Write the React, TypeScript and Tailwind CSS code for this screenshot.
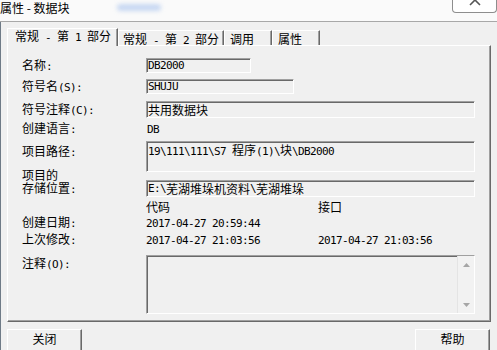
import React from 'react';
import clsx from 'clsx';

const CJK = "font-['Noto_Sans_CJK_SC',sans-serif] text-[12px]";
const LATIN = "font-['DejaVu_Sans_Mono',monospace] text-[11px] tracking-[-0.62px]";

// SimSun-like text: ASCII is half width (6px), CJK full width (12px)
function T({ s }: { s: string }) {
  const runs = s.match(/[\x00-\x7f]+|[^\x00-\x7f]+/g) ?? [];
  return (
    <>
      {runs.map((r, i) => (
        <span key={i} className={/^[\x00-\x7f]/.test(r) ? LATIN : CJK}>
          {r}
        </span>
      ))}
    </>
  );
}

function Field({ className, children }: { className?: string; children?: React.ReactNode }) {
  return (
    <div
      className={clsx(
        'border border-[#a0a0a0] border-r-white border-b-white shadow-[inset_1px_1px_0_#696969] pl-[1px]',
        className,
      )}
    >
      {children}
    </div>
  );
}

function Tab({ label, active, className }: { label: string; active?: boolean; className: string }) {
  return (
    <div
      className={clsx(
        'border-t border-l border-r border-white border-r-[#696969] shadow-[inset_-1px_0_0_#a0a0a0] bg-[#f0f0f0]',
        active ? 'relative z-10 -mb-px h-[18px]' : 'h-[15px] pt-[1px]',
        className,
      )}
    >
      <T s={label} />
    </div>
  );
}

function Button({ label }: { label: string }) {
  return (
    <div className="flex h-[24px] w-[75px] justify-center border border-white border-r-[#696969] border-b-[#696969] shadow-[inset_-1px_-1px_0_#a0a0a0] pt-[2px]">
      <T s={label} />
    </div>
  );
}

function Arrow({ up }: { up?: boolean }) {
  return (
    <div className="flex h-[17px] w-full items-center justify-center">
      <svg width="7" height="4" viewBox="0 0 7 4">
        <path d={up ? 'M0 4 L3.5 0 L7 4 Z' : 'M0 0 L3.5 4 L7 0 Z'} fill="#a6a6a6" />
      </svg>
    </div>
  );
}

export default function App() {
  return (
    <div className="h-[350px] w-[497px] overflow-hidden whitespace-pre bg-[#f0f0f0] leading-[13px] text-black">
      {/* title bar */}
      <div className="relative flex h-[22px] justify-between border-b border-[#a8a8a8] bg-[#fafafa]">
        <div className="font-['Noto_Sans_CJK_SC',sans-serif] text-[12px] leading-[15px]">属性 - 数据块</div>
        <div className="absolute left-[117px] top-[4px] h-[7px] w-[44px] rounded-full bg-[#c8d8f2] blur-[2px]" />
        <div className="flex h-[13px] w-[45px] justify-center overflow-hidden rounded-b-[4px] border border-t-0 border-[#8e8e8e] bg-white">
          <svg width="14" height="12" viewBox="0 0 14 12" className="-mt-[6px]">
            <path d="M2 1 L12 11 M12 1 L2 11" stroke="#555" strokeWidth="1.6" />
          </svg>
        </div>
      </div>

      <div className="flex h-[328px] flex-col border-l border-[#6f7b87]">
        {/* tabs */}
        <div className="mt-[6px] flex h-[17px] items-end pl-[6px]">
          <Tab label="常规 - 第 1 部分" active className="w-[111px] pl-[7px]" />
          <Tab label="常规 - 第 2 部分" className="w-[106px] pl-[4px]" />
          <Tab label="调用" className="w-[48px] pl-[5px]" />
          <Tab label="属性" className="w-[48px] pl-[5px]" />
        </div>

        {/* panel */}
        <div className="ml-[6px] flex w-[484px] flex-col border border-white border-r-[#696969] border-b-[#696969] shadow-[inset_-1px_-1px_0_#a0a0a0] pb-[7px] pl-[14px]">
          <div className="mt-[12px] flex h-[15px] items-center">
            <div className="w-[124px]"><T s="名称:" /></div>
            <Field className="flex h-full w-[105px] items-center"><T s="DB2000" /></Field>
          </div>
          <div className="mt-[6px] flex h-[15px] items-center">
            <div className="w-[124px]"><T s="符号名(S):" /></div>
            <Field className="flex h-full w-[148px] items-center"><T s="SHUJU" /></Field>
          </div>
          <div className="mt-[7px] flex h-[17px] items-center">
            <div className="w-[124px]"><T s="符号注释(C):" /></div>
            <Field className="flex h-full w-[329px] items-center"><T s="共用数据块" /></Field>
          </div>
          <div className="mt-[3px] flex h-[15px] items-center">
            <div className="w-[124px]"><T s="创建语言:" /></div>
            <div className="pl-[1px]"><T s="DB" /></div>
          </div>
          <div className="mt-[5px] flex h-[31px] items-start">
            <div className="w-[124px] pt-[3px]"><T s="项目路径:" /></div>
            <Field className="h-full w-[329px] pt-[1px]"><T s="19\111\111\S7 程序(1)\块\DB2000" /></Field>
          </div>
          <div className="mt-[8px] flex h-[17px] items-center">
            <div className="flex w-[124px] flex-col self-end pb-[3px]">
              <div className="h-[13px]"><T s="项目的" /></div>
              <div className="h-[13px]"><T s="存储位置:" /></div>
            </div>
            <Field className="flex h-full w-[329px] items-center"><T s="E:\芜湖堆垛机资料\芜湖堆垛" /></Field>
          </div>
          <div className="mt-[2px] flex h-[14px] items-center">
            <div className="w-[124px]" />
            <div className="w-[172px]"><T s="代码" /></div>
            <div><T s="接口" /></div>
          </div>
          <div className="mt-[3px] flex h-[13px] items-center">
            <div className="w-[124px]"><T s="创建日期:" /></div>
            <div className="w-[172px]"><T s="2017-04-27 20:59:44" /></div>
          </div>
          <div className="mt-[4px] flex h-[13px] items-center">
            <div className="w-[124px]"><T s="上次修改:" /></div>
            <div className="w-[172px]"><T s="2017-04-27 21:03:56" /></div>
            <div><T s="2017-04-27 21:03:56" /></div>
          </div>
          <div className="mt-[9px] flex h-[59px] items-start">
            <div className="w-[124px] pt-[1px]"><T s="注释(O):" /></div>
            <Field className="flex h-full w-[329px] justify-end pl-0">
              <div className="flex h-full w-[17px] flex-col justify-between border-l border-[#e4e4e4] bg-[#f2f2f2]">
                <Arrow up />
                <Arrow />
              </div>
            </Field>
          </div>
        </div>

        {/* buttons */}
        <div className="mt-[7px] flex justify-between pl-[6px] pr-[7px]">
          <Button label="关闭" />
          <Button label="帮助" />
        </div>
      </div>
    </div>
  );
}
